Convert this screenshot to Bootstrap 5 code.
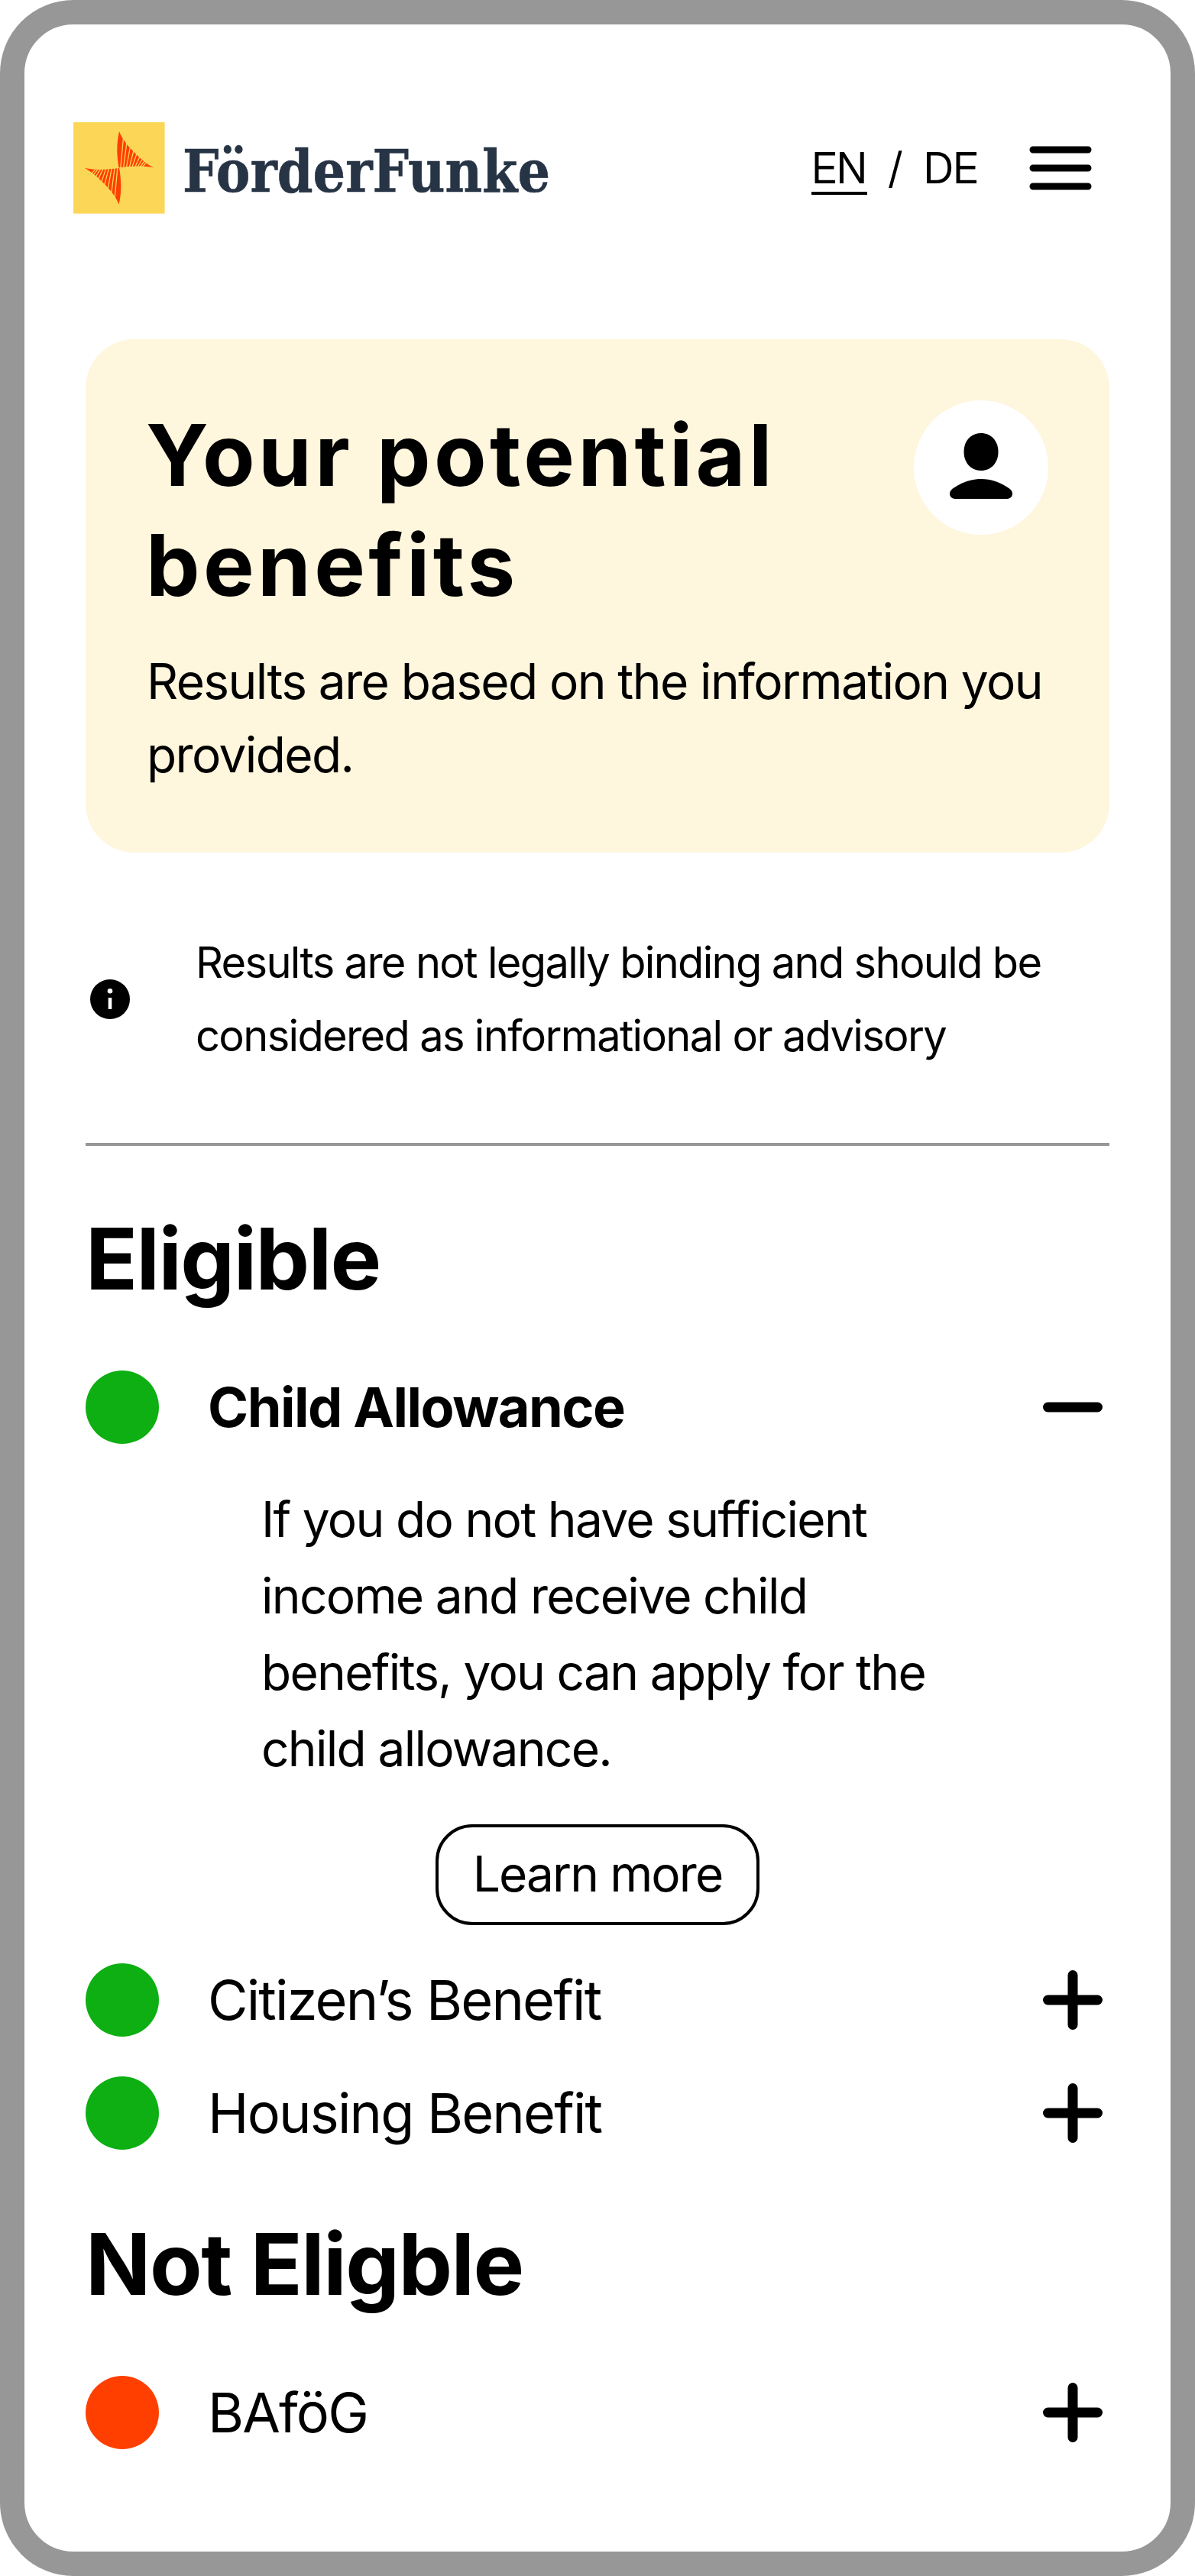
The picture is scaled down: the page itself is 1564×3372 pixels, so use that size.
<!DOCTYPE html>
<html lang="en">
<head>
<meta charset="utf-8">
<meta name="viewport" content="width=device-width, initial-scale=1">
<title>FörderFunke – Your potential benefits</title>
<link href="https://cdn.jsdelivr.net/npm/bootstrap@5.3.0/dist/css/bootstrap.min.css" rel="stylesheet">
<style>
  body { background: #fff; color: #000; font-family: Inter, "Liberation Sans", sans-serif; font-size: 64px; }
  .phone { height: 3372px; border: 32px solid #979797; border-radius: 96px; overflow: hidden; }
  .top-bar { padding: 128px 100px 0 64px; height: 248px; }
  .brand-name { width: 484px; height: 80px; margin-left: 22px; overflow: visible; }
  .lang { font-family: "Inter Display", Inter, sans-serif; font-size: 56px; line-height: 62px; border-top: 4px solid transparent; border-bottom: 4px solid transparent; color: #000; text-decoration: none; }
  .lang.current { border-bottom-color: #000; }
  .lang-sep { margin: 0 28px; }
  .menu-btn { margin-left: 64px; width: 88px; height: 88px; }
  .content-col { padding: 0 80px; }
  .hero { margin-top: 164px; padding: 80px; border-radius: 64px; background: #fef6dd; }
  .hero h1 { font-size: 112px; line-height: 144px; font-weight: 700; letter-spacing: .039em; margin: -1px 0 1px -1px; }
  .avatar { width: 176px; height: 176px; }
  .hero p { margin: 32px -40px 0 0; line-height: 96px; letter-spacing: -.0252em; }
  .notice { margin-top: 96px; font-size: 56px; line-height: 96px; letter-spacing: -.0299em; gap: 80px; }
  .rule { height: 4px; background: #979797; margin-top: 92px; }
  .section-title { font-size: 112px; line-height: 144px; font-weight: 700; letter-spacing: -.013em; margin: 75px 0; }
  .benefit + .section-title { margin-top: 77px; }
  .benefit { height: 96px; gap: 64px; font-size: 72px; line-height: 96px; letter-spacing: -.0255em; }
  .benefit.open { font-weight: 700; letter-spacing: -.0213em; }
  .benefit + .benefit { margin-top: 52px; }
  .dot { width: 96px; height: 96px; background: #0daf13; }
  .dot.no { background: #ff3f00; }
  .detail { margin: 49px 0 50px; }
  .detail p { margin: 0 160px 49px 230px; line-height: 100px; letter-spacing: -.0265em; }
  .more-btn { width: 424px; height: 132px; border: 4px solid #000; border-radius: 48px; font-size: 64px; line-height: 96px; padding: 0 0 2px; letter-spacing: -.03em; color: #000; }
</style>
</head>
<body>
<div class="phone">
  <header class="top-bar d-flex align-items-center justify-content-between">
    <a class="d-flex align-items-center text-decoration-none" href="#">
      <svg width="120" height="120" viewBox="0 0 120 120" aria-hidden="true">
        <rect width="119.6" height="119.6" fill="#fcd757"/>
        <defs>
          <g id="spark">
            <path d="M60 12C63 20 70 29.500 75.500 35C84 44 94 54 105 59.500C90 56.500 75 57.500 59.500 59.500C56.500 42 56.500 27 60 12Z" fill="#ff3f00"/>
            <path d="M65.500 20L61.800 60M70 26L65.500 60M74.500 32L69.300 60M79 37L73 60M83 41L76.500 60M87 45L80 60M90.500 48L83 60M93.500 50.500L86 60M96 52.500L88.500 60" stroke="#fcd757" stroke-width="1.300"/>
          </g>
        </defs>
        <use href="#spark"/>
        <use href="#spark" transform="rotate(180 59.800 59.800)"/>
      </svg>
      <svg class="brand-name" viewBox="0 0 484 80"><text x="1" y="71" textLength="481" lengthAdjust="spacingAndGlyphs" font-family="DejaVu Serif, serif" font-weight="700" font-size="76" fill="#263445" stroke="#263445" stroke-width=".6">FörderFunke</text></svg>
    </a>
    <nav class="d-flex align-items-center">
      <a class="lang current" href="#">EN</a><span class="lang lang-sep">/</span><a class="lang" href="#">DE</a>
      <svg class="menu-btn" viewBox="0 0 88 88" role="img" aria-label="Menu"><path d="M8 20H80M8 44H80M8 68H80" stroke="#000" stroke-width="9" stroke-linecap="round"/></svg>
    </nav>
  </header>

  <main class="content-col">
    <section class="hero">
      <div class="d-flex justify-content-between align-items-start">
        <h1>Your potential<br>benefits</h1>
        <svg class="avatar flex-shrink-0" viewBox="0 0 176 176" aria-hidden="true">
          <circle cx="88" cy="88" r="88" fill="#fff"/>
          <path d="M88 43C101 43 110.500 53 110.500 67.500C110.500 82 101 92 88 92C75 92 65.500 82 65.500 67.500C65.500 53 75 43 88 43Z"/>
          <path d="M54 129C49 129 47 125 47 122.500C47 119 48.500 117.500 51 115.500C62 107.500 75 103 88 103C101 103 114 107.500 125 115.500C127.500 117.500 129 119 129 122.500C129 125 127 129 122 129Z"/>
        </svg>
      </div>
      <p>Results are based on the information you<br>provided.</p>
    </section>

    <section class="notice d-flex align-items-center">
      <svg class="flex-shrink-0" width="64" height="64" viewBox="0 0 64 64" aria-hidden="true"><circle cx="32" cy="32" r="26"/><circle cx="32" cy="21.300" r="3.300" fill="#fff"/><path d="M32 30V45" stroke="#fff" stroke-width="4.600"/></svg>
      <div>Results are not legally binding and should be<br>considered as informational or advisory</div>
    </section>
    <div class="rule"></div>

    <h2 class="section-title">Eligible</h2>
    <div class="benefit open d-flex align-items-center">
      <span class="dot rounded-circle"></span><span class="flex-grow-1">Child Allowance</span>
      <svg width="96" height="96" viewBox="0 0 96 96"><path d="M15.500 48H80.500" stroke="#000" stroke-width="13" stroke-linecap="round"/></svg>
    </div>
    <div class="detail text-center">
      <p class="text-start">If you do not have sufficient<br>income and receive child<br>benefits, you can apply for the<br>child allowance.</p>
      <button class="btn more-btn d-block mx-auto" type="button">Learn more</button>
    </div>
    <div class="benefit d-flex align-items-center">
      <span class="dot rounded-circle"></span><span class="flex-grow-1">Citizen’s Benefit</span>
      <svg width="96" height="96" viewBox="0 0 96 96"><path d="M15.500 48H80.500M48 15.500V80.500" stroke="#000" stroke-width="13" stroke-linecap="round"/></svg>
    </div>
    <div class="benefit d-flex align-items-center">
      <span class="dot rounded-circle"></span><span class="flex-grow-1">Housing Benefit</span>
      <svg width="96" height="96" viewBox="0 0 96 96"><path d="M15.500 48H80.500M48 15.500V80.500" stroke="#000" stroke-width="13" stroke-linecap="round"/></svg>
    </div>

    <h2 class="section-title">Not Eligble</h2>
    <div class="benefit d-flex align-items-center">
      <span class="dot no rounded-circle"></span><span class="flex-grow-1">BAföG</span>
      <svg width="96" height="96" viewBox="0 0 96 96"><path d="M15.500 48H80.500M48 15.500V80.500" stroke="#000" stroke-width="13" stroke-linecap="round"/></svg>
    </div>
  </main>
</div>
<script src="https://cdn.jsdelivr.net/npm/bootstrap@5.3.0/dist/js/bootstrap.bundle.min.js"></script>
</body>
</html>
